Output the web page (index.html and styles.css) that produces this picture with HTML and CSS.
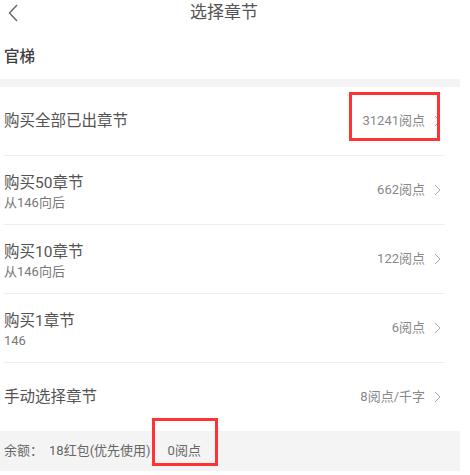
FILE: index.html
```html
<!DOCTYPE html>
<html lang="zh">
<head>
<meta charset="utf-8">
<link rel="stylesheet" href="styles.css">
</head>
<body>
<div class="page">
  <header class="topbar">
    <span class="back">
      <svg width="10" height="18" viewBox="0 0 10 18"><path d="M9 1 L1.5 9 L9 17" fill="none" stroke="#666" stroke-width="1.4"/></svg>
    </span>
    <h1 class="title">选择章节</h1>
    <span></span>
  </header>
  <div class="section-name">官梯</div>
  <div class="gap"></div>
  <ul class="list">
    <li class="row">
      <div class="left"><div class="main">购买全部已出章节</div></div>
      <div class="right"><span class="price mark">31241阅点</span><svg class="chev" width="7" height="12" viewBox="0 0 7 12"><path d="M1 1 L6 6 L1 11" fill="none" stroke="#aaa" stroke-width="1"/></svg></div>
    </li>
    <li class="row">
      <div class="left two"><div class="main">购买50章节</div><div class="sub">从146向后</div></div>
      <div class="right"><span class="price">662阅点</span><svg class="chev" width="7" height="12" viewBox="0 0 7 12"><path d="M1 1 L6 6 L1 11" fill="none" stroke="#aaa" stroke-width="1"/></svg></div>
    </li>
    <li class="row">
      <div class="left two"><div class="main">购买10章节</div><div class="sub">从146向后</div></div>
      <div class="right"><span class="price">122阅点</span><svg class="chev" width="7" height="12" viewBox="0 0 7 12"><path d="M1 1 L6 6 L1 11" fill="none" stroke="#aaa" stroke-width="1"/></svg></div>
    </li>
    <li class="row">
      <div class="left two"><div class="main">购买1章节</div><div class="sub">146</div></div>
      <div class="right"><span class="price">6阅点</span><svg class="chev" width="7" height="12" viewBox="0 0 7 12"><path d="M1 1 L6 6 L1 11" fill="none" stroke="#aaa" stroke-width="1"/></svg></div>
    </li>
    <li class="row last">
      <div class="left"><div class="main">手动选择章节</div></div>
      <div class="right"><span class="price">8阅点/千字</span><svg class="chev" width="7" height="12" viewBox="0 0 7 12"><path d="M1 1 L6 6 L1 11" fill="none" stroke="#aaa" stroke-width="1"/></svg></div>
    </li>
  </ul>
  <footer class="balance">
    <span class="label">余额：</span>
    <span class="red">18红包(优先使用)</span>
    <span class="points mark2">0阅点</span>
  </footer>
</div>
</body>
</html>
```

FILE: styles.css
```css
*, *::before, *::after { box-sizing: border-box; }
html, body {
  margin: 0;
  padding: 0;
  background: #fff;
}
body {
  font-family: Roboto, "Noto Sans CJK SC", sans-serif;
  color: #555;
}
.page {
  width: 460px;
}
.topbar {
  width: 448px;
  height: 24px;
  display: grid;
  grid-template-columns: 1fr auto 1fr;
  align-items: center;
}
.back {
  display: flex;
  padding-left: 8px;
  padding-top: 1px;
}
.title {
  margin: 0;
  font-size: 17px;
  font-weight: normal;
  line-height: 24px;
  color: #555;
}
.section-name {
  height: 55px;
  padding: 22px 0 0 4px;
  font-size: 15.5px;
  font-weight: 500;
  line-height: 22px;
  color: #3c3c3c;
}
.gap {
  height: 8px;
  background: #f4f4f4;
}
.list {
  list-style: none;
  margin: 0;
  padding: 0;
}
.row {
  height: 69px;
  margin: 0 15px 0 4px;
  display: flex;
  align-items: center;
  justify-content: space-between;
  border-bottom: 1px solid #eeeeee;
}
.row.last {
  height: 68px;
  border-bottom: none;
}
.left.two {
  padding-top: 6px;
}
.main {
  font-size: 15.5px;
  line-height: 19px;
  color: #565352;
}
.sub {
  font-size: 13px;
  line-height: 19px;
  color: #777;
}
.right {
  display: flex;
  align-items: center;
  gap: 9px;
  padding-right: 4px;
}
.price {
  font-size: 13px;
  color: #888;
  line-height: 18px;
}
.chev { display: block; }
.mark { position: relative; }
.mark::after {
  content: "";
  position: absolute;
  left: -13px;
  top: -20px;
  width: 91px;
  height: 49px;
  border: 3px solid #f33;
}
.balance {
  height: 40px;
  background: #f4f4f4;
  display: flex;
  align-items: center;
  padding-left: 4px;
  font-size: 13px;
  line-height: 18px;
  color: #666;
}
.label { margin-right: 6px; }
.points {
  margin-left: 17px;
  position: relative;
}
.mark2::after {
  content: "";
  position: absolute;
  left: -16px;
  top: -24px;
  width: 66px;
  height: 48px;
  border: 3px solid #f33;
}
```
